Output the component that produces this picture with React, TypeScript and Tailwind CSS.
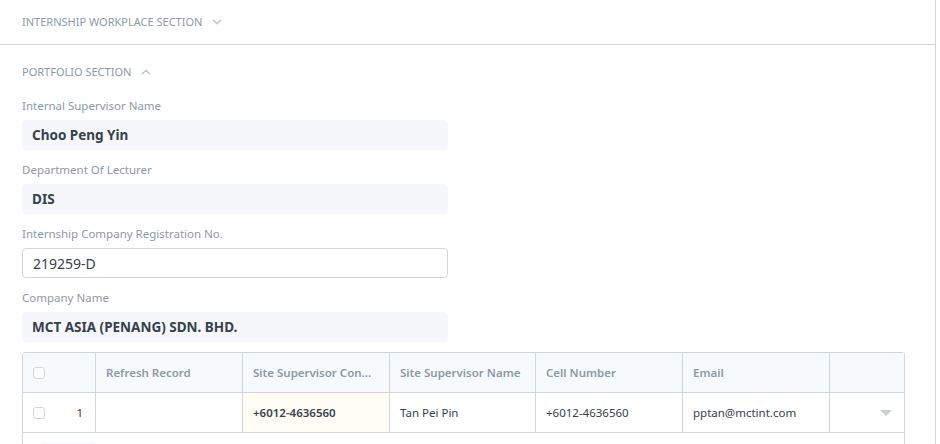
import { ChevronDown, ChevronUp } from 'lucide-react'

const font = { fontFamily: '"Noto Sans", "Open Sans", sans-serif' }

function ReadOnlyField({ label, value }: { label: string; value: string }) {
  return (
    <div className="mb-[11px]">
      <div className="text-[11.5px] leading-[18px] text-[#8d99a6] mb-[5px]">{label}</div>
      <div className="w-[426px] h-[30px] rounded-[4px] bg-[#f5f7fa] px-[10px] flex items-center text-[13.5px] font-bold text-[#36414c]">
        {value}
      </div>
    </div>
  )
}

function Checkbox() {
  return <span className="inline-block w-[12px] h-[12px] rounded-[3px] border border-[#d1d8dd] bg-white" />
}

const columns = [
  { title: 'Refresh Record', w: 'w-[147px]' },
  { title: 'Site Supervisor Con...', w: 'w-[147px]' },
  { title: 'Site Supervisor Name', w: 'w-[146px]' },
  { title: 'Cell Number', w: 'w-[147px]' },
  { title: 'Email', w: 'w-[147px]' },
]

export default function App() {
  return (
    <div style={font} className="w-[936px] h-[444px] bg-white border-r border-[#d1d8dd] overflow-hidden">
      {/* collapsed section */}
      <div className="h-[45px] border-b border-[#d1d8dd] px-[22px] flex items-center gap-[8px]">
        <span className="text-[11px] text-[#8d99a6]">INTERNSHIP WORKPLACE SECTION</span>
        <ChevronDown size={14} strokeWidth={2.5} className="text-[#c0c6cc]" />
      </div>

      {/* portfolio section */}
      <div className="px-[22px] pt-[18px]">
        <div className="flex items-center gap-[8px] h-[18px] mb-[16px]">
          <span className="text-[11px] text-[#8d99a6]">PORTFOLIO SECTION</span>
          <ChevronUp size={14} strokeWidth={2.5} className="text-[#c0c6cc]" />
        </div>

        <ReadOnlyField label="Internal Supervisor Name" value="Choo Peng Yin" />
        <ReadOnlyField label="Department Of Lecturer" value="DIS" />

        <div className="mb-[11px]">
          <div className="text-[11.5px] leading-[18px] text-[#8d99a6] mb-[5px]">Internship Company Registration No.</div>
          <div className="w-[426px] h-[30px] rounded-[4px] border border-[#d1d8dd] bg-white px-[10px] flex items-center text-[14px] text-[#36414c]">
            219259-D
          </div>
        </div>

        <ReadOnlyField label="Company Name" value="MCT ASIA (PENANG) SDN. BHD." />

        {/* child table */}
        <div className="-mt-px w-[883px] border border-[#d1d8dd] rounded-t-[3px] text-[11.5px]">
          <div className="flex h-[40px] bg-[#f7fafc] border-b border-[#d1d8dd] font-semibold text-[#8d99a6]">
            <div className="w-[73px] border-r border-[#d1d8dd] flex items-center pl-[10px]">
              <Checkbox />
            </div>
            {columns.map((c) => (
              <div key={c.title} className={`${c.w} border-r border-[#d1d8dd] flex items-center px-[10px] whitespace-nowrap`}>
                {c.title}
              </div>
            ))}
            <div className="flex-1" />
          </div>
          <div className="flex h-[40px] border-b border-[#d1d8dd] text-[#36414c]">
            <div className="w-[73px] border-r border-[#d1d8dd] flex items-center justify-between pl-[10px] pr-[12px]">
              <Checkbox />
              <span>1</span>
            </div>
            <div className="w-[147px] border-r border-[#d1d8dd]" />
            <div className="w-[147px] border-r border-[#d1d8dd] bg-[#fffdf4] flex items-center px-[10px] font-semibold">
              +6012-4636560
            </div>
            <div className="w-[146px] border-r border-[#d1d8dd] flex items-center px-[10px]">Tan Pei Pin</div>
            <div className="w-[147px] border-r border-[#d1d8dd] flex items-center px-[10px]">+6012-4636560</div>
            <div className="w-[147px] border-r border-[#d1d8dd] flex items-center px-[10px]">pptan@mctint.com</div>
            <div className="flex-1 flex items-center justify-end pr-[12px]">
              <span className="w-0 h-0 border-l-[6px] border-r-[6px] border-t-[6px] border-l-transparent border-r-transparent border-t-[#c8ced4]" />
            </div>
          </div>
          <div className="h-[20px] pl-[18px] pt-[10px]">
            <div className="w-[56px] h-[20px] rounded-[3px] bg-[#f0f4f7]" />
          </div>
        </div>
      </div>
    </div>
  )
}
